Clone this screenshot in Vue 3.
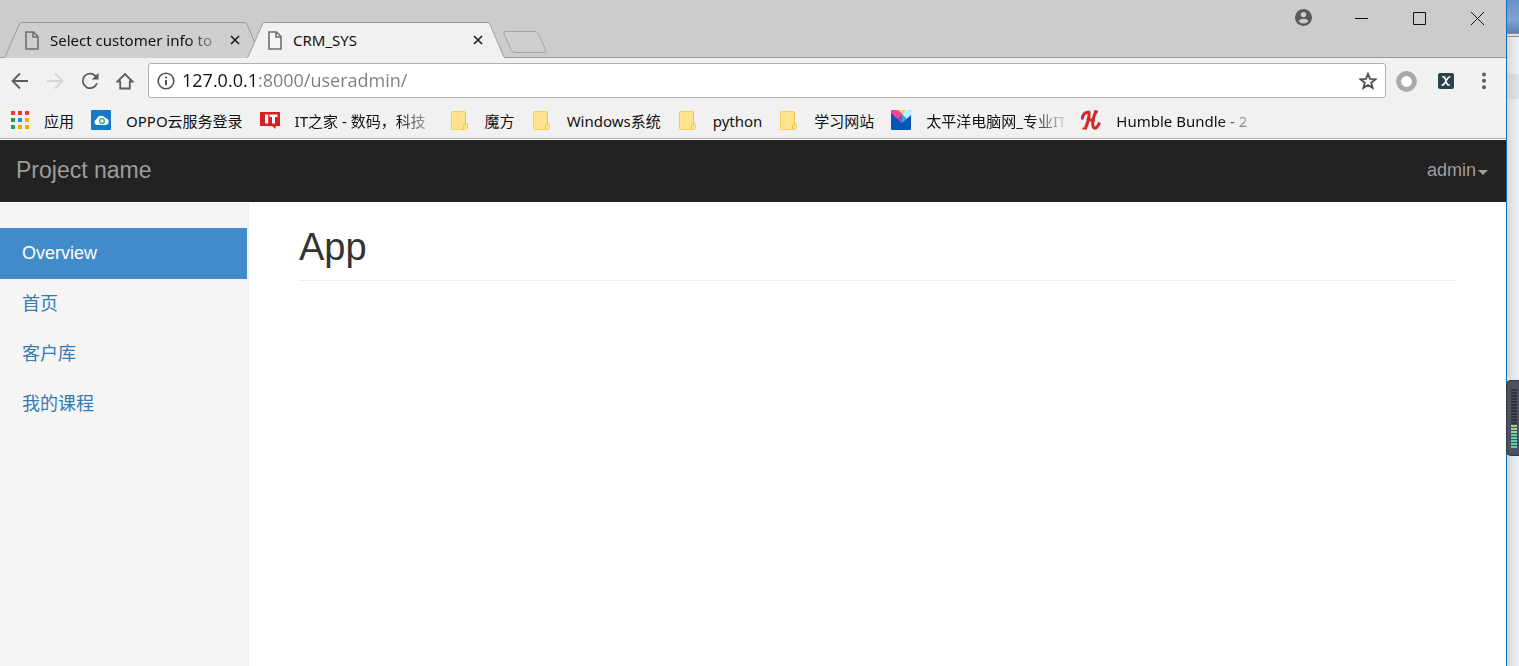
<script setup>
import { ref } from 'vue'

const address = ref('127.0.0.1:8000/useradmin/')

const tabs = [
  { title: 'Select customer info to', active: false },
  { title: 'CRM_SYS', active: true },
]

const bookmarks = [
  { icon: 'apps', label: '应用' },
  { icon: 'cloud', label: 'OPPO云服务登录' },
  { icon: 'it', label: 'IT之家 - 数码，科技', clipped: true },
  { icon: 'folder', label: '魔方' },
  { icon: 'folder', label: 'Windows系统' },
  { icon: 'folder', label: 'python' },
  { icon: 'folder', label: '学习网站' },
  { icon: 'pc', label: '太平洋电脑网_专业IT', clipped: true },
  { icon: 'humble', label: 'Humble Bundle - 2', clipped: true },
]

const appDots = ['#f23a30', '#f23a30', '#f23a30', '#1fa055', '#2b86f5', '#f9ab00', '#1fa055', '#f9ab00', '#f9ab00']

const menu = [
  { label: 'Overview', active: true },
  { label: '首页' },
  { label: '客户库' },
  { label: '我的课程' },
]
</script>

<template>
  <div class="screen">
    <div class="browser">
      <header class="tabstrip">
        <div class="tabs">
          <div v-for="tab in tabs" :key="tab.title" class="tab" :class="{ active: tab.active }">
            <svg class="tab-shape" viewBox="0 0 258 36" aria-hidden="true">
              <path d="M0 35.5 H0.5 L14.5 2.5 Q15.5 0.5 17 0.5 H240.500 Q242.500 0.5 243.500 2.500 L257.500 35.500 V36 H0 Z" class="tab-fill" />
              <path d="M0 35.500 Q1 35.500 1.500 34 L15 3 Q16 0.500 18 0.500 H240 Q242 0.500 243 2.500 L256.500 34 Q257 35.500 258 35.500" class="tab-line" />
            </svg>
            <svg class="page-icon" viewBox="0 0 14 19" aria-hidden="true">
              <path d="M1 1 H8.500 L13 5.500 V18 H1 Z M8 1 V6 H13" />
            </svg>
            <span class="tab-title" :class="{ fade: !tab.active }">{{ tab.title }}</span>
            <button class="tab-close" aria-label="Close tab">
              <svg width="10" height="10" viewBox="0 0 10 10"><path d="M1 1 L9 9 M9 1 L1 9" /></svg>
            </button>
          </div>
          <button class="new-tab" aria-label="New tab">
            <svg width="44" height="22" viewBox="0 0 44 22">
              <path d="M3 0.500 H32 Q34.500 0.500 35.500 3 L42.500 18.500 Q43.500 21.500 41 21.500 H12 Q9.500 21.500 8.500 19.500 L1 3 Q0 0.500 3 0.500 Z" />
            </svg>
          </button>
        </div>
        <div class="window-buttons">
          <button aria-label="Profile">
            <svg width="18" height="18" viewBox="0 0 18 18">
              <circle cx="9.500" cy="8.500" r="8.500" fill="#5a5a5a" />
              <circle cx="9.500" cy="5.600" r="2.700" fill="#ccc" />
              <path d="M4.300 12 Q6 9.800 9.500 9.800 T14.700 12 Q12.800 14.600 9.500 14.600 T4.300 12 Z" fill="#ccc" />
            </svg>
          </button>
          <button aria-label="Minimize">
            <svg width="14" height="13" viewBox="0 0 14 13"><path d="M1 6.500 H14" class="thin" /></svg>
          </button>
          <button aria-label="Maximize">
            <svg width="13" height="13" viewBox="0 0 13 13"><path d="M0.500 0.500 H12.500 V12.500 H0.500 Z" class="thin" /></svg>
          </button>
          <button aria-label="Close">
            <svg width="13" height="13" viewBox="0 0 13 13"><path d="M0 0 L13 13 M13 0 L0 13" class="thin" /></svg>
          </button>
        </div>
      </header>

      <div class="toolbar">
        <button class="nav-button" aria-label="Back">
          <svg width="18" height="18" viewBox="0 0 18 18"><path d="M17 9 H2 M9 1.500 L1.500 9 L9 16.500" /></svg>
        </button>
        <button class="nav-button off" aria-label="Forward" disabled>
          <svg width="18" height="18" viewBox="0 0 18 18"><path d="M1 9 H16 M9 1.500 L16.500 9 L9 16.500" /></svg>
        </button>
        <button class="nav-button" aria-label="Reload">
          <svg width="18" height="18" viewBox="0 0 18 18">
            <path d="M15 4.600 A7.300 7.300 0 1 0 16 11.200" />
            <path d="M17.500 0.800 V7.600 H10.700 Z" class="solid" />
          </svg>
        </button>
        <button class="nav-button" aria-label="Home">
          <svg width="18" height="18" viewBox="0 0 18 18"><path d="M1.500 9.500 L9 2 L16.500 9.500 H13.800 V16.500 H4.200 V9.500 Z" /></svg>
        </button>
        <div class="address">
          <svg width="18" height="18" viewBox="0 0 18 18" aria-hidden="true">
            <circle cx="9" cy="9" r="7.800" fill="none" stroke="#505357" stroke-width="1.600" />
            <path d="M9 8 V13.200 M9 4.700 V6.600" fill="none" stroke="#505357" stroke-width="2" />
          </svg>
          <input v-model="address" type="text" aria-label="Address" spellcheck="false" />
          <button class="star" aria-label="Bookmark this page">
            <svg width="18" height="18" viewBox="0 0 18 18">
              <path d="M9 1.800 L11 6.900 L16.500 7.200 L12.200 10.700 L13.700 16 L9 13 L4.300 16 L5.800 10.700 L1.500 7.200 L7 6.900 Z" />
            </svg>
          </button>
        </div>
        <button class="extension" aria-label="Extension">
          <svg width="22" height="22" viewBox="0 0 22 22">
            <circle cx="11.500" cy="11.500" r="7.900" fill="#fff" stroke="#a9a9a9" stroke-width="5" />
          </svg>
        </button>
        <button class="extension" aria-label="XPath helper">
          <svg width="16" height="16" viewBox="0 0 16 16">
            <rect width="16" height="16" rx="2" fill="#2d434c" />
            <path d="M4.300 4 Q6.300 3 7.200 5.800 L8.800 10.200 Q9.500 12.600 11.600 11.800 M12.300 3.800 Q10.800 3.500 9 6.300 L6.800 10 Q5.400 12.500 3.600 12" fill="none" stroke="#fff" stroke-width="1.600" />
          </svg>
        </button>
        <button class="more" aria-label="Menu">
          <svg width="4" height="18" viewBox="0 0 4 18">
            <circle cx="2" cy="2.500" r="2" /><circle cx="2" cy="8.800" r="2" /><circle cx="2" cy="15.200" r="2" />
          </svg>
        </button>
      </div>

      <nav class="bookmarks" aria-label="Bookmarks">
        <a v-for="item in bookmarks" :key="item.label" href="#" class="bookmark">
          <svg class="bookmark-icon" viewBox="0 0 20 20" aria-hidden="true">
            <template v-if="item.icon === 'apps'">
              <rect v-for="(color, i) in appDots" :key="i" :x="2 + (i % 3) * 7" :y="1 + Math.floor(i / 3) * 7" width="4" height="4" :fill="color" />
            </template>
            <template v-else-if="item.icon === 'cloud'">
              <rect width="20" height="20" rx="1" fill="#1479c9" />
              <path d="M5.500 15 A3 3 0 0 1 5.500 9.300 A5 5 0 0 1 14.700 8.300 A3.400 3.400 0 0 1 15 15 Z" fill="#fff" />
              <circle cx="11" cy="11" r="2.400" fill="#fff" stroke="#35a596" stroke-width="1.400" />
            </template>
            <template v-else-if="item.icon === 'it'">
              <path d="M0 2 H20 V16 H15.500 V19 L12 16 H0 Z" fill="#d32024" />
              <path d="M5 4.500 H8.200 V13.500 H5 Z M9.500 4.500 H17.500 V7 H15 V13.500 H12 V7 H9.500 Z" fill="#fff" />
            </template>
            <template v-else-if="item.icon === 'folder'">
              <path d="M1.500 2.500 Q1.500 1.500 2.500 1.500 H14.500 Q15.500 1.500 15.500 2.500 V13.500 H16.500 Q17.500 13.500 17.500 14.500 V17 Q17.500 19.500 15.500 19.500 H2.500 Q1.500 19.500 1.500 18.500 Z" fill="#ffe48d" stroke="#f3cf59" />
              <path d="M15.500 2 V14.500 Q13.500 14 13.500 16.500 V19" fill="none" stroke="#edc23e" />
            </template>
            <template v-else-if="item.icon === 'pc'">
              <path d="M2 0 H18 Q20 0 20 2 V19 Q20 20 19 20 H1 Q0 20 0 19 V2 Q0 0 2 0 Z" fill="#0356b8" />
              <path d="M0 3 Q1 0 4 0 H8 L11 4 V13 L0 3 Z" fill="#fb4399" />
              <path d="M7 0 H14 L11 4 Z" fill="#ffdc20" />
              <path d="M14 0 H18 Q20 0 20 2 V5 L15.500 9 L11 4 Z" fill="#bdf1ff" />
              <path d="M11 4 L15.500 9 L11 13 L6 8.500 Z" fill="#31a9e6" />
              <path d="M11 4 V13 L6 8.500 Z" fill="#b73c9d" />
            </template>
            <template v-else>
              <path d="M1 9.500 C1.500 4.500 4.500 2 8.500 2 M8 1.500 C8.500 7 6.500 14 4.500 18 M15.500 1 C12.500 5 10.500 14 12.500 17.500 C14.500 19.500 17.500 16 18.500 12.500 M5.500 10 H14" fill="none" stroke="#cf2b2f" stroke-width="3" />
              <path d="M1.500 18.500 H6 M13 1.500 H17" fill="none" stroke="#cf2b2f" stroke-width="2" />
            </template>
          </svg>
          <span :class="{ clipped: item.clipped }">{{ item.label }}</span>
        </a>
      </nav>

      <div class="navbar">
        <a href="#" class="brand">Project name</a>
        <button class="user">admin<span class="caret"></span></button>
      </div>

      <div class="page">
        <nav class="sidebar" aria-label="Main">
          <a v-for="item in menu" :key="item.label" href="#" :class="{ active: item.active }">{{ item.label }}</a>
        </nav>
        <main>
          <h2>App</h2>
        </main>
      </div>
    </div>

    <aside class="desktop">
      <div class="wallpaper"></div>
      <div class="window-edge"></div>
      <div class="window-bar"></div>
      <div class="meter">
        <i v-for="n in 20" :key="n" :class="{ low: n > 12, lower: n > 15 }"></i>
      </div>
    </aside>
  </div>
</template>

<style>
body {
  margin: 0;
}
</style>

<style scoped>
.screen {
  display: flex;
  min-height: 100vh;
  font-family: "Noto Sans", "Noto Sans CJK SC", sans-serif;
  color: #111;
}

.screen * {
  box-sizing: border-box;
}

button {
  display: flex;
  align-items: center;
  justify-content: center;
  padding: 0;
  border: 0;
  background: none;
  font: inherit;
}

a {
  text-decoration: none;
}

svg {
  flex: none;
}

.browser {
  flex: 1;
  min-width: 0;
  display: flex;
  flex-direction: column;
  border-right: 1px solid #0f70bd;
  background: #fff;
}

.tabstrip {
  display: flex;
  justify-content: space-between;
  height: 58px;
  background: #ccc;
  box-shadow: inset 0 -1px #999;
}

.tabs {
  display: flex;
  align-items: flex-end;
  padding-left: 4px;
}

.tab {
  position: relative;
  display: flex;
  align-items: center;
  width: 258px;
  height: 36px;
  padding: 0 22px 0 21px;
}

.tab + .tab {
  margin-left: -15px;
}

.tab-shape {
  position: absolute;
  inset: 0;
  width: 100%;
  height: 100%;
}

.tab-fill {
  fill: #cfcfcf;
}

.tab-line {
  fill: none;
  stroke: #999;
}

.tab.active .tab-fill {
  fill: #f1f1f1;
}

.page-icon {
  position: relative;
  width: 14px;
  height: 19px;
  fill: none;
  stroke: #6e6e6e;
  stroke-width: 1.6px;
}

.tab.active .page-icon {
  fill: #f5f5f5;
}

.tab-title {
  position: relative;
  flex: 1;
  margin-left: 11px;
  white-space: nowrap;
  font-size: 15px;
  line-height: 22px;
}

.fade {
  mask-image: linear-gradient(to right, #000 136px, transparent 176px);
}

.tab-close {
  position: relative;
  width: 10px;
  height: 20px;
  margin-left: 10px;
}

.tab-close path {
  fill: none;
  stroke: #222;
  stroke-width: 1.7px;
}

.new-tab {
  height: 22px;
  margin: 0 0 5px -2px;
}

.new-tab path {
  fill: #cfcfcf;
  stroke: #a4a4a4;
}

.window-buttons {
  display: flex;
}

.window-buttons button {
  width: 58px;
  height: 36px;
}

.thin {
  fill: none;
  stroke: #111;
}

.toolbar {
  display: flex;
  align-items: center;
  padding: 5px 4px 3px 2px;
  background: #f1f1f1;
}

.nav-button {
  width: 35px;
  height: 35px;
}

.nav-button path {
  fill: none;
  stroke: #5a5d62;
  stroke-width: 1.8px;
}

.nav-button.off path {
  stroke: #d6d6d6;
}

.nav-button .solid {
  fill: #5a5d62;
  stroke: none;
}

.address {
  flex: 1;
  display: flex;
  align-items: center;
  height: 35px;
  margin-left: 6px;
  padding: 0 8px;
  border: 1px solid #b0b0b0;
  border-radius: 3px;
  background: #fff;
}

.address input {
  flex: 1;
  min-width: 0;
  height: 32px;
  margin: 0 8px 0 7px;
  padding: 0 0 2px;
  border: 0;
  outline: 0;
  background: linear-gradient(to right, #111 76px, #7d7d7d 76px);
  background-clip: text;
  color: transparent;
  font: 18px/30px "Open Sans", sans-serif;
}

.star path {
  fill: none;
  stroke: #4b4d51;
  stroke-width: 1.8px;
}

.extension {
  width: 40px;
  height: 35px;
}

.more {
  width: 36px;
  height: 35px;
}

.more circle {
  fill: #5a5d62;
}

.bookmarks {
  display: flex;
  align-items: center;
  gap: 17px;
  height: 38px;
  padding-left: 9px;
  border-bottom: 1px solid #ababab;
  background: #f1f1f1;
}

.bookmark {
  display: flex;
  align-items: center;
  gap: 15px;
  flex: none;
  color: #111;
  font-size: 15px;
  line-height: 22px;
  white-space: nowrap;
}

.bookmark span {
  padding-top: 2px;
}

.bookmark-icon {
  width: 20px;
  height: 20px;
}

.clipped {
  width: 138px;
  mask-image: linear-gradient(to right, #000 105px, transparent 144px);
}

.navbar {
  display: flex;
  align-items: center;
  justify-content: space-between;
  height: 62px;
  margin-top: 1px;
  padding: 0 18px 2px 16px;
  background: #222;
  font-family: "Liberation Sans", Arial, sans-serif;
}

.brand {
  color: #9d9d9d;
  font-size: 23px;
  line-height: 32px;
}

.user {
  gap: 2px;
  color: #9d9d9d;
  font-size: 18px;
  line-height: 24px;
}

.caret {
  margin-top: 4px;
  border-top: 5px solid #9d9d9d;
  border-right: 5px solid transparent;
  border-left: 5px solid transparent;
}

.page {
  flex: 1;
  display: flex;
  font-family: "Liberation Sans", "Noto Sans CJK SC", Arial, sans-serif;
}

.sidebar {
  flex: none;
  width: 249px;
  margin-top: 1px;
  padding: 25px 1px 0 0;
  border-right: 1px solid #eee;
  background: #f5f5f5;
}

.sidebar a {
  display: block;
  padding: 13px 22px;
  color: #337ab7;
  font-size: 18px;
  line-height: 24px;
}

.sidebar a.active {
  padding-bottom: 14px;
  background: #428bca;
  color: #fff;
}

main {
  flex: 1;
  padding: 24px 49px 0 50px;
}

h2 {
  margin: 0;
  padding-bottom: 12px;
  border-bottom: 1px solid #eee;
  color: #333;
  font-size: 38px;
  font-weight: 400;
  line-height: 42px;
}

.desktop {
  position: relative;
  flex: none;
  width: 12px;
  background: linear-gradient(to right, #d9d9d9, #f0f0f0);
}

.wallpaper {
  height: 33px;
  background: linear-gradient(to bottom, #6b91c4, #7fa3d2 60%, #5b80b2);
}

.window-edge {
  height: 4px;
  border: solid #8c8c8c;
  border-width: 1px 0;
  background: #ddd;
}

.window-bar {
  height: 25px;
  margin-top: 37px;
  background: linear-gradient(to right, #cfcfcf, #e2e2e2);
}

.meter {
  position: absolute;
  top: 380px;
  right: 0;
  display: flex;
  flex-direction: column;
  gap: 1px;
  width: 13px;
  height: 76px;
  padding: 8px 2px 0 4px;
  border: 1px solid #343844;
  border-right: 0;
  border-radius: 5px 0 0 5px;
  background: #4c5160;
}

.meter i {
  height: 2px;
  background: #2f333e;
}

.meter .low {
  background: #a0cf7c;
}

.meter .lower {
  background: #5ccfae;
}
</style>
